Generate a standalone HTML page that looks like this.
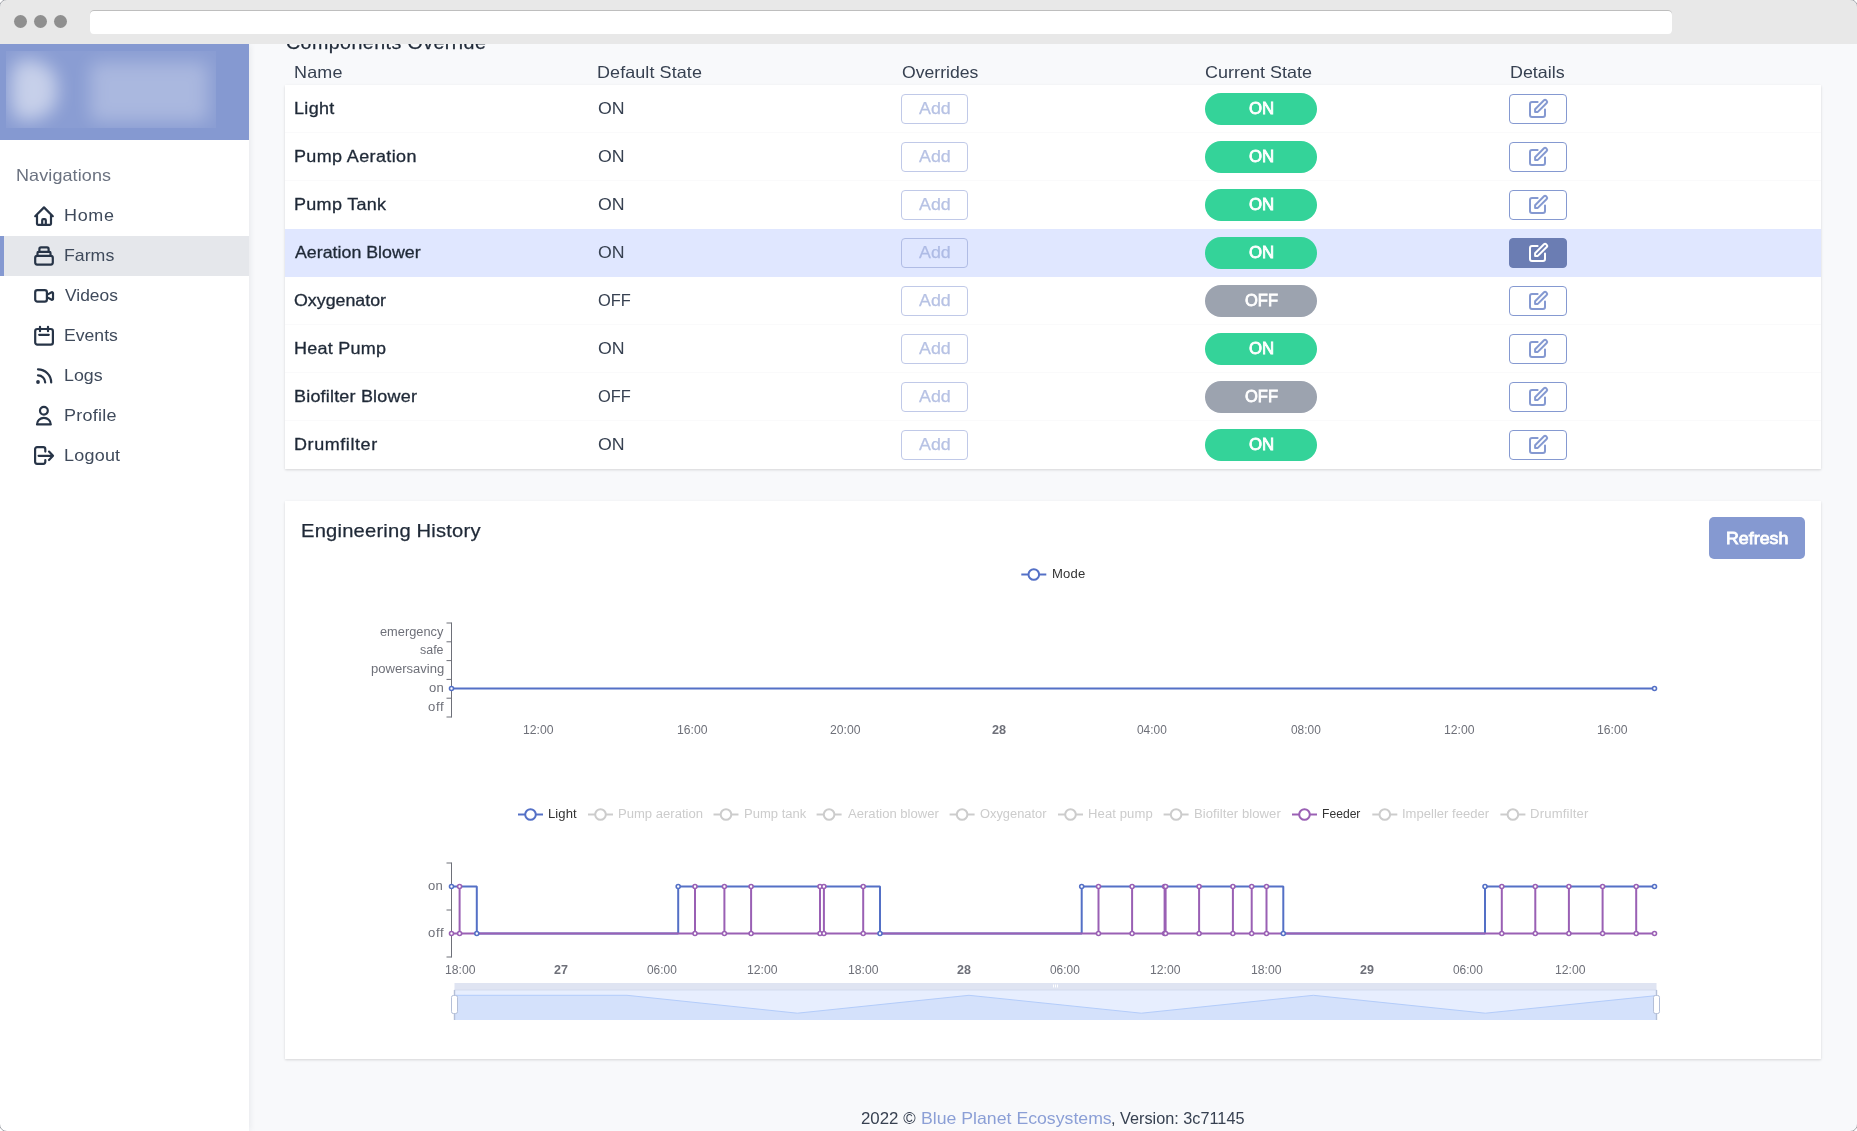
<!DOCTYPE html>
<html lang="en"><head><meta charset="utf-8"><title>Farm - Components Override</title><style>
*{box-sizing:border-box}
html,body{margin:0;padding:0}
body{width:1857px;height:1131px;overflow:hidden;background:#fff;position:relative;font-family:"Liberation Sans",sans-serif;}
#win{position:absolute;left:0;top:0;width:1857px;height:1131px;border-radius:7px;overflow:hidden;background:#f8f9fb;}
#frame{position:absolute;left:-1px;top:-1px;width:1859px;height:1133px;border:1px solid #a4a7ad;border-radius:8px;pointer-events:none}
.abs{position:absolute}
.grp{display:contents}
#chrome{position:absolute;left:0;top:0;width:1857px;height:44px;background:#e8e8e8;}
.dot{position:absolute;top:15px;width:13px;height:13px;border-radius:50%;background:#8f8f8f}
#url{position:absolute;left:90px;top:10px;width:1582px;height:24px;background:#fff;border-radius:4px;box-shadow:inset 0 1px 0 #bebebe}
#side{position:absolute;left:0;top:44px;width:249px;height:1087px;background:#fff;box-shadow:0 0 7px rgba(30,40,60,.10)}
#logo{position:absolute;left:0;top:0;width:249px;height:96px;background:#8599d1;overflow:hidden}
#blurbox{position:absolute;left:6px;top:7px;width:210px;height:77px;overflow:hidden;background:rgba(255,255,255,.045)}
#blurbox i{position:absolute;display:block;filter:blur(7px);background:#fff}
#active{position:absolute;left:0;top:192px;width:249px;height:40px;background:#e5e7eb;border-left:4px solid #8599d1}
.t{position:absolute;white-space:pre;line-height:20px;height:20px;transform-origin:0 50%}
.card{position:absolute;background:#fff;box-shadow:0 1px 3px rgba(0,0,0,.10),0 1px 2px rgba(0,0,0,.05)}
.rowline{position:absolute;left:285px;width:1536px;height:1px;background:#fafafb}
.add{position:absolute;left:901px;width:67px;height:30px;border:1px solid #c0c9e8;border-radius:4px;background:#fff}
.pill{position:absolute;left:1205px;width:112px;height:32px;border-radius:16px}
.on{background:#34d399}.off{background:#9ca3af}
.det{position:absolute;left:1509px;width:58px;height:30px;border:1px solid #8599d1;border-radius:4px;background:#fff}
.det.sel{background:#6b7db3;border-color:#6b7db3}
#refresh{position:absolute;left:1709px;top:517px;width:96px;height:42px;border-radius:5px;background:#8599d1}
svg{position:absolute;left:0;top:0;overflow:visible}
svg text{font-family:"Liberation Sans",sans-serif;font-size:12px}
</style></head><body>
<div id="win">
<main class="grp">
<section class="grp" id="components">
<div class="card" style="left:285px;top:85px;width:1536px;height:384px"></div>
<div class="abs" style="left:285px;top:229px;width:1536px;height:48px;background:#e0e7ff"></div>
<div class="rowline" style="top:132px"></div>
<div class="rowline" style="top:180px"></div>
<div class="rowline" style="top:324px"></div>
<div class="rowline" style="top:372px"></div>
<div class="rowline" style="top:420px"></div>
<div class="add" style="top:94px;"></div>
<div class="pill on" style="top:93px"></div>
<div class="det" style="top:94px"><svg width="20" height="20" viewBox="0 0 20 20" style="left:18px;top:3px" fill="none" stroke="#8599d1" stroke-width="2" stroke-linecap="round" stroke-linejoin="round"><path d="M9.6 4H4a2 2 0 0 0-2 2v11a2 2 0 0 0 2 2h11a2 2 0 0 0 2-2v-5.6" /><path d="M7.1 13.9v-2.7l8.9-8.9a1.5 1.5 0 0 1 2.1 0l.6.6a1.5 1.5 0 0 1 0 2.1l-8.9 8.9z"/></svg></div>
<div class="add" style="top:142px;"></div>
<div class="pill on" style="top:141px"></div>
<div class="det" style="top:142px"><svg width="20" height="20" viewBox="0 0 20 20" style="left:18px;top:3px" fill="none" stroke="#8599d1" stroke-width="2" stroke-linecap="round" stroke-linejoin="round"><path d="M9.6 4H4a2 2 0 0 0-2 2v11a2 2 0 0 0 2 2h11a2 2 0 0 0 2-2v-5.6" /><path d="M7.1 13.9v-2.7l8.9-8.9a1.5 1.5 0 0 1 2.1 0l.6.6a1.5 1.5 0 0 1 0 2.1l-8.9 8.9z"/></svg></div>
<div class="add" style="top:190px;"></div>
<div class="pill on" style="top:189px"></div>
<div class="det" style="top:190px"><svg width="20" height="20" viewBox="0 0 20 20" style="left:18px;top:3px" fill="none" stroke="#8599d1" stroke-width="2" stroke-linecap="round" stroke-linejoin="round"><path d="M9.6 4H4a2 2 0 0 0-2 2v11a2 2 0 0 0 2 2h11a2 2 0 0 0 2-2v-5.6" /><path d="M7.1 13.9v-2.7l8.9-8.9a1.5 1.5 0 0 1 2.1 0l.6.6a1.5 1.5 0 0 1 0 2.1l-8.9 8.9z"/></svg></div>
<div class="add" style="top:238px;background:transparent;border-color:#b0bce5;"></div>
<div class="pill on" style="top:237px"></div>
<div class="det sel" style="top:238px"><svg width="20" height="20" viewBox="0 0 20 20" style="left:18px;top:3px" fill="none" stroke="#fff" stroke-width="2" stroke-linecap="round" stroke-linejoin="round"><path d="M9.6 4H4a2 2 0 0 0-2 2v11a2 2 0 0 0 2 2h11a2 2 0 0 0 2-2v-5.6" /><path d="M7.1 13.9v-2.7l8.9-8.9a1.5 1.5 0 0 1 2.1 0l.6.6a1.5 1.5 0 0 1 0 2.1l-8.9 8.9z"/></svg></div>
<div class="add" style="top:286px;"></div>
<div class="pill off" style="top:285px"></div>
<div class="det" style="top:286px"><svg width="20" height="20" viewBox="0 0 20 20" style="left:18px;top:3px" fill="none" stroke="#8599d1" stroke-width="2" stroke-linecap="round" stroke-linejoin="round"><path d="M9.6 4H4a2 2 0 0 0-2 2v11a2 2 0 0 0 2 2h11a2 2 0 0 0 2-2v-5.6" /><path d="M7.1 13.9v-2.7l8.9-8.9a1.5 1.5 0 0 1 2.1 0l.6.6a1.5 1.5 0 0 1 0 2.1l-8.9 8.9z"/></svg></div>
<div class="add" style="top:334px;"></div>
<div class="pill on" style="top:333px"></div>
<div class="det" style="top:334px"><svg width="20" height="20" viewBox="0 0 20 20" style="left:18px;top:3px" fill="none" stroke="#8599d1" stroke-width="2" stroke-linecap="round" stroke-linejoin="round"><path d="M9.6 4H4a2 2 0 0 0-2 2v11a2 2 0 0 0 2 2h11a2 2 0 0 0 2-2v-5.6" /><path d="M7.1 13.9v-2.7l8.9-8.9a1.5 1.5 0 0 1 2.1 0l.6.6a1.5 1.5 0 0 1 0 2.1l-8.9 8.9z"/></svg></div>
<div class="add" style="top:382px;"></div>
<div class="pill off" style="top:381px"></div>
<div class="det" style="top:382px"><svg width="20" height="20" viewBox="0 0 20 20" style="left:18px;top:3px" fill="none" stroke="#8599d1" stroke-width="2" stroke-linecap="round" stroke-linejoin="round"><path d="M9.6 4H4a2 2 0 0 0-2 2v11a2 2 0 0 0 2 2h11a2 2 0 0 0 2-2v-5.6" /><path d="M7.1 13.9v-2.7l8.9-8.9a1.5 1.5 0 0 1 2.1 0l.6.6a1.5 1.5 0 0 1 0 2.1l-8.9 8.9z"/></svg></div>
<div class="add" style="top:430px;"></div>
<div class="pill on" style="top:429px"></div>
<div class="det" style="top:430px"><svg width="20" height="20" viewBox="0 0 20 20" style="left:18px;top:3px" fill="none" stroke="#8599d1" stroke-width="2" stroke-linecap="round" stroke-linejoin="round"><path d="M9.6 4H4a2 2 0 0 0-2 2v11a2 2 0 0 0 2 2h11a2 2 0 0 0 2-2v-5.6" /><path d="M7.1 13.9v-2.7l8.9-8.9a1.5 1.5 0 0 1 2.1 0l.6.6a1.5 1.5 0 0 1 0 2.1l-8.9 8.9z"/></svg></div>
<span class="t" style="left:285.54px;top:33px;font-size:18px;letter-spacing:0.403px;color:#1f2937;-webkit-text-stroke:0.25px #1f2937;transform:scaleX(1.0900);">Components Override</span>
<span class="t" style="left:294.07px;top:62px;font-size:16.5px;letter-spacing:0.169px;color:#374151;transform:scaleX(1.0900);">Name</span>
<span class="t" style="left:597.07px;top:62px;font-size:16.5px;letter-spacing:0.070px;color:#374151;transform:scaleX(1.0900);">Default State</span>
<span class="t" style="left:901.56px;top:62px;font-size:16.5px;letter-spacing:0.000px;color:#374151;transform:scaleX(1.0677);">Overrides</span>
<span class="t" style="left:1205.45px;top:62px;font-size:16.5px;letter-spacing:0.000px;color:#374151;transform:scaleX(1.0899);">Current State</span>
<span class="t" style="left:1509.77px;top:62px;font-size:16.5px;letter-spacing:0.000px;color:#374151;transform:scaleX(1.0839);">Details</span>
<span class="t" style="left:293.65px;top:98px;font-size:16.5px;letter-spacing:0.298px;color:#1f2937;-webkit-text-stroke:0.3px #1f2937;transform:scaleX(1.0900);">Light</span>
<span class="t" style="left:597.66px;top:98px;font-size:16.5px;letter-spacing:0.000px;color:#374151;transform:scaleX(1.0753);">ON</span>
<span class="t" style="left:918.53px;top:98px;font-size:16.5px;letter-spacing:0.000px;color:#b7c2e4;-webkit-text-stroke:0.25px #b7c2e4;transform:scaleX(1.0824);">Add</span>
<span class="t" style="left:1249.11px;top:98px;font-size:16.5px;letter-spacing:0.000px;color:#fff;-webkit-text-stroke:0.8px #fff;transform:scaleX(1.0162);">ON</span>
<span class="t" style="left:293.65px;top:146px;font-size:16.5px;letter-spacing:0.346px;color:#1f2937;-webkit-text-stroke:0.3px #1f2937;transform:scaleX(1.0900);">Pump Aeration</span>
<span class="t" style="left:597.66px;top:146px;font-size:16.5px;letter-spacing:0.000px;color:#374151;transform:scaleX(1.0753);">ON</span>
<span class="t" style="left:918.53px;top:146px;font-size:16.5px;letter-spacing:0.000px;color:#b7c2e4;-webkit-text-stroke:0.25px #b7c2e4;transform:scaleX(1.0824);">Add</span>
<span class="t" style="left:1249.11px;top:146px;font-size:16.5px;letter-spacing:0.000px;color:#fff;-webkit-text-stroke:0.8px #fff;transform:scaleX(1.0162);">ON</span>
<span class="t" style="left:293.65px;top:194px;font-size:16.5px;letter-spacing:0.276px;color:#1f2937;-webkit-text-stroke:0.3px #1f2937;transform:scaleX(1.0900);">Pump Tank</span>
<span class="t" style="left:597.66px;top:194px;font-size:16.5px;letter-spacing:0.000px;color:#374151;transform:scaleX(1.0753);">ON</span>
<span class="t" style="left:918.53px;top:194px;font-size:16.5px;letter-spacing:0.000px;color:#b7c2e4;-webkit-text-stroke:0.25px #b7c2e4;transform:scaleX(1.0824);">Add</span>
<span class="t" style="left:1249.11px;top:194px;font-size:16.5px;letter-spacing:0.000px;color:#fff;-webkit-text-stroke:0.8px #fff;transform:scaleX(1.0162);">ON</span>
<span class="t" style="left:294.76px;top:242px;font-size:16.5px;letter-spacing:0.000px;color:#1f2937;-webkit-text-stroke:0.3px #1f2937;transform:scaleX(1.0786);">Aeration Blower</span>
<span class="t" style="left:597.66px;top:242px;font-size:16.5px;letter-spacing:0.000px;color:#374151;transform:scaleX(1.0753);">ON</span>
<span class="t" style="left:918.53px;top:242px;font-size:16.5px;letter-spacing:0.000px;color:#aebbe5;-webkit-text-stroke:0.25px #aebbe5;transform:scaleX(1.0824);">Add</span>
<span class="t" style="left:1249.11px;top:242px;font-size:16.5px;letter-spacing:0.000px;color:#fff;-webkit-text-stroke:0.8px #fff;transform:scaleX(1.0162);">ON</span>
<span class="t" style="left:293.76px;top:290px;font-size:16.5px;letter-spacing:-0.000px;color:#1f2937;-webkit-text-stroke:0.3px #1f2937;transform:scaleX(1.0785);">Oxygenator</span>
<span class="t" style="left:597.67px;top:290px;font-size:16.5px;letter-spacing:0.000px;color:#374151;transform:scaleX(0.9964);">OFF</span>
<span class="t" style="left:918.53px;top:290px;font-size:16.5px;letter-spacing:0.000px;color:#b7c2e4;-webkit-text-stroke:0.25px #b7c2e4;transform:scaleX(1.0824);">Add</span>
<span class="t" style="left:1244.90px;top:290px;font-size:16.5px;letter-spacing:0.000px;color:#fff;-webkit-text-stroke:0.8px #fff;transform:scaleX(0.9993);">OFF</span>
<span class="t" style="left:293.65px;top:338px;font-size:16.5px;letter-spacing:0.236px;color:#1f2937;-webkit-text-stroke:0.3px #1f2937;transform:scaleX(1.0900);">Heat Pump</span>
<span class="t" style="left:597.66px;top:338px;font-size:16.5px;letter-spacing:0.000px;color:#374151;transform:scaleX(1.0753);">ON</span>
<span class="t" style="left:918.53px;top:338px;font-size:16.5px;letter-spacing:0.000px;color:#b7c2e4;-webkit-text-stroke:0.25px #b7c2e4;transform:scaleX(1.0824);">Add</span>
<span class="t" style="left:1249.11px;top:338px;font-size:16.5px;letter-spacing:0.000px;color:#fff;-webkit-text-stroke:0.8px #fff;transform:scaleX(1.0162);">ON</span>
<span class="t" style="left:293.65px;top:386px;font-size:16.5px;letter-spacing:0.179px;color:#1f2937;-webkit-text-stroke:0.3px #1f2937;transform:scaleX(1.0900);">Biofilter Blower</span>
<span class="t" style="left:597.67px;top:386px;font-size:16.5px;letter-spacing:0.000px;color:#374151;transform:scaleX(0.9964);">OFF</span>
<span class="t" style="left:918.53px;top:386px;font-size:16.5px;letter-spacing:0.000px;color:#b7c2e4;-webkit-text-stroke:0.25px #b7c2e4;transform:scaleX(1.0824);">Add</span>
<span class="t" style="left:1244.90px;top:386px;font-size:16.5px;letter-spacing:0.000px;color:#fff;-webkit-text-stroke:0.8px #fff;transform:scaleX(0.9993);">OFF</span>
<span class="t" style="left:293.65px;top:434px;font-size:16.5px;letter-spacing:0.533px;color:#1f2937;-webkit-text-stroke:0.3px #1f2937;transform:scaleX(1.0900);">Drumfilter</span>
<span class="t" style="left:597.66px;top:434px;font-size:16.5px;letter-spacing:0.000px;color:#374151;transform:scaleX(1.0753);">ON</span>
<span class="t" style="left:918.53px;top:434px;font-size:16.5px;letter-spacing:0.000px;color:#b7c2e4;-webkit-text-stroke:0.25px #b7c2e4;transform:scaleX(1.0824);">Add</span>
<span class="t" style="left:1249.11px;top:434px;font-size:16.5px;letter-spacing:0.000px;color:#fff;-webkit-text-stroke:0.8px #fff;transform:scaleX(1.0162);">ON</span>
</section>
<section class="grp" id="history">
<div class="card" style="left:285px;top:501px;width:1536px;height:558px"></div>
<div id="refresh"></div>
<svg width="1857" height="1131" viewBox="0 0 1857 1131">
<g stroke="#5470c6" stroke-width="2" fill="#fff"><path d="M1021.3 574.5h25"/><circle cx="1033.8" cy="574.5" r="5.3"/></g>
<path d="M451.5 622.5V717.5M446.5 623.0h5M446.5 641.8h5M446.5 660.6h5M446.5 679.4h5M446.5 698.2h5M446.5 717.0h5" stroke="#6e7079" stroke-width="1" fill="none"/>
<path d="M451.5 688.5H1654.5" stroke="#5470c6" stroke-width="2" fill="none"/>
<circle cx="451.5" cy="688.5" r="2" fill="#fff" stroke="#5470c6" stroke-width="1.6"/>
<circle cx="1654.5" cy="688.5" r="2" fill="#fff" stroke="#5470c6" stroke-width="1.6"/>
<g stroke="#5470c6" stroke-width="2" fill="#fff"><path d="M518 814.5h25"/><circle cx="530.5" cy="814.5" r="5.3"/></g>
<g stroke="#ccc" stroke-width="2" fill="#fff"><path d="M588 814.5h25"/><circle cx="600.5" cy="814.5" r="5.3"/></g>
<g stroke="#ccc" stroke-width="2" fill="#fff"><path d="M713.5 814.5h25"/><circle cx="726.0" cy="814.5" r="5.3"/></g>
<g stroke="#ccc" stroke-width="2" fill="#fff"><path d="M816.6 814.5h25"/><circle cx="829.1" cy="814.5" r="5.3"/></g>
<g stroke="#ccc" stroke-width="2" fill="#fff"><path d="M949.6 814.5h25"/><circle cx="962.1" cy="814.5" r="5.3"/></g>
<g stroke="#ccc" stroke-width="2" fill="#fff"><path d="M1058 814.5h25"/><circle cx="1070.5" cy="814.5" r="5.3"/></g>
<g stroke="#ccc" stroke-width="2" fill="#fff"><path d="M1163.6 814.5h25"/><circle cx="1176.1" cy="814.5" r="5.3"/></g>
<g stroke="#9a60b4" stroke-width="2" fill="#fff"><path d="M1292 814.5h25"/><circle cx="1304.5" cy="814.5" r="5.3"/></g>
<g stroke="#ccc" stroke-width="2" fill="#fff"><path d="M1372.3 814.5h25"/><circle cx="1384.8" cy="814.5" r="5.3"/></g>
<g stroke="#ccc" stroke-width="2" fill="#fff"><path d="M1500.4 814.5h25"/><circle cx="1512.9" cy="814.5" r="5.3"/></g>
<path d="M451.5 862.5V957.5M446.5 863h5M446.5 910h5M446.5 957h5" stroke="#6e7079" stroke-width="1" fill="none"/>
<path d="M451.5 886.5 L476.8 886.5 L476.8 933.5 L678.2 933.5 L678.2 886.5 L880 886.5 L880 933.5 L1081.7 933.5 L1081.7 886.5 L1283.3 886.5 L1283.3 933.5 L1485 933.5 L1485 886.5 L1654.5 886.5" stroke="#5470c6" stroke-width="2" fill="none" stroke-linejoin="bevel"/>
<path d="M451.5 933.5 L459.6 933.5 L459.6 886.5 L459.6 933.5 L695 933.5 L695 886.5 L695 933.5 L724.4 933.5 L724.4 886.5 L724.4 933.5 L751.1 933.5 L751.1 886.5 L751.1 933.5 L820 933.5 L820 886.5 L820 933.5 L823.9 933.5 L823.9 886.5 L823.9 933.5 L863.2 933.5 L863.2 886.5 L863.2 933.5 L1098.5 933.5 L1098.5 886.5 L1098.5 933.5 L1132.1 933.5 L1132.1 886.5 L1132.1 933.5 L1164.6 933.5 L1164.6 886.5 L1164.6 933.5 L1165.6 933.5 L1165.6 886.5 L1165.6 933.5 L1199.1 933.5 L1199.1 886.5 L1199.1 933.5 L1232.9 933.5 L1232.9 886.5 L1232.9 933.5 L1251.7 933.5 L1251.7 886.5 L1251.7 933.5 L1266.5 933.5 L1266.5 886.5 L1266.5 933.5 L1501.8 933.5 L1501.8 886.5 L1501.8 933.5 L1535.3 933.5 L1535.3 886.5 L1535.3 933.5 L1568.9 933.5 L1568.9 886.5 L1568.9 933.5 L1602.6 933.5 L1602.6 886.5 L1602.6 933.5 L1636.2 933.5 L1636.2 886.5 L1636.2 933.5 L1654.5 933.5" stroke="#9a60b4" stroke-width="2" fill="none" stroke-linejoin="bevel"/>
<circle cx="451.5" cy="886.5" r="2" fill="#fff" stroke="#5470c6" stroke-width="1.6"/>
<circle cx="476.8" cy="933.5" r="2" fill="#fff" stroke="#5470c6" stroke-width="1.6"/>
<circle cx="678.2" cy="886.5" r="2" fill="#fff" stroke="#5470c6" stroke-width="1.6"/>
<circle cx="880" cy="933.5" r="2" fill="#fff" stroke="#5470c6" stroke-width="1.6"/>
<circle cx="1081.7" cy="886.5" r="2" fill="#fff" stroke="#5470c6" stroke-width="1.6"/>
<circle cx="1283.3" cy="933.5" r="2" fill="#fff" stroke="#5470c6" stroke-width="1.6"/>
<circle cx="1485" cy="886.5" r="2" fill="#fff" stroke="#5470c6" stroke-width="1.6"/>
<circle cx="1654.5" cy="886.5" r="2" fill="#fff" stroke="#5470c6" stroke-width="1.6"/>
<circle cx="451.5" cy="933.5" r="2" fill="#fff" stroke="#9a60b4" stroke-width="1.6"/>
<circle cx="1654.5" cy="933.5" r="2" fill="#fff" stroke="#9a60b4" stroke-width="1.6"/>
<circle cx="459.6" cy="886.5" r="2" fill="#fff" stroke="#9a60b4" stroke-width="1.6"/>
<circle cx="459.6" cy="933.5" r="2" fill="#fff" stroke="#9a60b4" stroke-width="1.6"/>
<circle cx="695" cy="886.5" r="2" fill="#fff" stroke="#9a60b4" stroke-width="1.6"/>
<circle cx="695" cy="933.5" r="2" fill="#fff" stroke="#9a60b4" stroke-width="1.6"/>
<circle cx="724.4" cy="886.5" r="2" fill="#fff" stroke="#9a60b4" stroke-width="1.6"/>
<circle cx="724.4" cy="933.5" r="2" fill="#fff" stroke="#9a60b4" stroke-width="1.6"/>
<circle cx="751.1" cy="886.5" r="2" fill="#fff" stroke="#9a60b4" stroke-width="1.6"/>
<circle cx="751.1" cy="933.5" r="2" fill="#fff" stroke="#9a60b4" stroke-width="1.6"/>
<circle cx="820" cy="886.5" r="2" fill="#fff" stroke="#9a60b4" stroke-width="1.6"/>
<circle cx="820" cy="933.5" r="2" fill="#fff" stroke="#9a60b4" stroke-width="1.6"/>
<circle cx="823.9" cy="886.5" r="2" fill="#fff" stroke="#9a60b4" stroke-width="1.6"/>
<circle cx="823.9" cy="933.5" r="2" fill="#fff" stroke="#9a60b4" stroke-width="1.6"/>
<circle cx="863.2" cy="886.5" r="2" fill="#fff" stroke="#9a60b4" stroke-width="1.6"/>
<circle cx="863.2" cy="933.5" r="2" fill="#fff" stroke="#9a60b4" stroke-width="1.6"/>
<circle cx="1098.5" cy="886.5" r="2" fill="#fff" stroke="#9a60b4" stroke-width="1.6"/>
<circle cx="1098.5" cy="933.5" r="2" fill="#fff" stroke="#9a60b4" stroke-width="1.6"/>
<circle cx="1132.1" cy="886.5" r="2" fill="#fff" stroke="#9a60b4" stroke-width="1.6"/>
<circle cx="1132.1" cy="933.5" r="2" fill="#fff" stroke="#9a60b4" stroke-width="1.6"/>
<circle cx="1164.6" cy="886.5" r="2" fill="#fff" stroke="#9a60b4" stroke-width="1.6"/>
<circle cx="1164.6" cy="933.5" r="2" fill="#fff" stroke="#9a60b4" stroke-width="1.6"/>
<circle cx="1165.6" cy="886.5" r="2" fill="#fff" stroke="#9a60b4" stroke-width="1.6"/>
<circle cx="1165.6" cy="933.5" r="2" fill="#fff" stroke="#9a60b4" stroke-width="1.6"/>
<circle cx="1199.1" cy="886.5" r="2" fill="#fff" stroke="#9a60b4" stroke-width="1.6"/>
<circle cx="1199.1" cy="933.5" r="2" fill="#fff" stroke="#9a60b4" stroke-width="1.6"/>
<circle cx="1232.9" cy="886.5" r="2" fill="#fff" stroke="#9a60b4" stroke-width="1.6"/>
<circle cx="1232.9" cy="933.5" r="2" fill="#fff" stroke="#9a60b4" stroke-width="1.6"/>
<circle cx="1251.7" cy="886.5" r="2" fill="#fff" stroke="#9a60b4" stroke-width="1.6"/>
<circle cx="1251.7" cy="933.5" r="2" fill="#fff" stroke="#9a60b4" stroke-width="1.6"/>
<circle cx="1266.5" cy="886.5" r="2" fill="#fff" stroke="#9a60b4" stroke-width="1.6"/>
<circle cx="1266.5" cy="933.5" r="2" fill="#fff" stroke="#9a60b4" stroke-width="1.6"/>
<circle cx="1501.8" cy="886.5" r="2" fill="#fff" stroke="#9a60b4" stroke-width="1.6"/>
<circle cx="1501.8" cy="933.5" r="2" fill="#fff" stroke="#9a60b4" stroke-width="1.6"/>
<circle cx="1535.3" cy="886.5" r="2" fill="#fff" stroke="#9a60b4" stroke-width="1.6"/>
<circle cx="1535.3" cy="933.5" r="2" fill="#fff" stroke="#9a60b4" stroke-width="1.6"/>
<circle cx="1568.9" cy="886.5" r="2" fill="#fff" stroke="#9a60b4" stroke-width="1.6"/>
<circle cx="1568.9" cy="933.5" r="2" fill="#fff" stroke="#9a60b4" stroke-width="1.6"/>
<circle cx="1602.6" cy="886.5" r="2" fill="#fff" stroke="#9a60b4" stroke-width="1.6"/>
<circle cx="1602.6" cy="933.5" r="2" fill="#fff" stroke="#9a60b4" stroke-width="1.6"/>
<circle cx="1636.2" cy="886.5" r="2" fill="#fff" stroke="#9a60b4" stroke-width="1.6"/>
<circle cx="1636.2" cy="933.5" r="2" fill="#fff" stroke="#9a60b4" stroke-width="1.6"/>
<rect x="454.5" y="990" width="1202.0" height="30" fill="#e7eefe"/>
<path d="M454.5 995.3 L627 995.3 L797.3 1013.2 L969 995.3 L1141.3 1013.2 L1313.4 995.3 L1485.3 1013.2 L1656.5 995.6 L1656.5 1020 L454.5 1020Z" fill="#d4e1fb"/>
<path d="M454.5 995.3 L627 995.3 L797.3 1013.2 L969 995.3 L1141.3 1013.2 L1313.4 995.3 L1485.3 1013.2 L1656.5 995.6" fill="none" stroke="#b3ccfa" stroke-width="1"/>
<rect x="454.5" y="983" width="1202.0" height="7" fill="#dfe4f2"/>
<path d="M454.5 990H1656.5" stroke="#d3dbee" stroke-width="1"/>
<path d="M1053.5 984.5v3M1055.5 984.5v3M1057.5 984.5v3" stroke="#fff" stroke-width="1"/>
<path d="M454.5 990V1020" stroke="#b4bfd8" stroke-width="1.4"/>
<rect x="451.5" y="995.5" width="6" height="18" rx="1.8" fill="#fff" stroke="#b4bfd8" stroke-width="1"/>
<path d="M1656.5 990V1020" stroke="#b4bfd8" stroke-width="1.4"/>
<rect x="1653.5" y="995.5" width="6" height="18" rx="1.8" fill="#fff" stroke="#b4bfd8" stroke-width="1"/>
</svg>
<span class="t" style="left:301.48px;top:521px;font-size:18.5px;letter-spacing:0.181px;color:#1f2937;-webkit-text-stroke:0.25px #1f2937;transform:scaleX(1.0900);">Engineering History</span>
<span class="t" style="left:1726.04px;top:528px;font-size:16.5px;letter-spacing:0.000px;color:#fff;-webkit-text-stroke:0.8px #fff;transform:scaleX(1.0805);">Refresh</span>
<span class="t" style="left:380.29px;top:622px;font-size:12px;letter-spacing:0.000px;color:#6e7079;transform:scaleX(1.0664);">emergency</span>
<span class="t" style="left:420.31px;top:640px;font-size:12px;letter-spacing:-0.000px;color:#6e7079;transform:scaleX(1.0365);">safe</span>
<span class="t" style="left:370.54px;top:659px;font-size:12px;letter-spacing:0.000px;color:#6e7079;transform:scaleX(1.0855);">powersaving</span>
<span class="t" style="left:428.77px;top:678px;font-size:12px;letter-spacing:0.296px;color:#6e7079;transform:scaleX(1.0900);">on</span>
<span class="t" style="left:427.67px;top:697px;font-size:12px;letter-spacing:0.585px;color:#6e7079;transform:scaleX(1.0900);">off</span>
<span class="t" style="left:523.10px;top:720px;font-size:12px;letter-spacing:0.000px;color:#6e7079;transform:scaleX(1.0168);">12:00</span>
<span class="t" style="left:676.70px;top:720px;font-size:12px;letter-spacing:0.000px;color:#6e7079;transform:scaleX(1.0168);">16:00</span>
<span class="t" style="left:830.04px;top:720px;font-size:12px;letter-spacing:-0.000px;color:#6e7079;transform:scaleX(1.0155);">20:00</span>
<span class="t" style="left:991.80px;top:720px;font-size:12px;letter-spacing:0.000px;color:#6e7079;font-weight:700;transform:scaleX(1.0554);">28</span>
<span class="t" style="left:1137.48px;top:720px;font-size:12px;letter-spacing:0.000px;color:#6e7079;transform:scaleX(0.9909);">04:00</span>
<span class="t" style="left:1290.98px;top:720px;font-size:12px;letter-spacing:0.000px;color:#6e7079;transform:scaleX(0.9909);">08:00</span>
<span class="t" style="left:1443.70px;top:720px;font-size:12px;letter-spacing:0.000px;color:#6e7079;transform:scaleX(1.0168);">12:00</span>
<span class="t" style="left:1597.20px;top:720px;font-size:12px;letter-spacing:0.000px;color:#6e7079;transform:scaleX(1.0168);">16:00</span>
<span class="t" style="left:1051.83px;top:564px;font-size:12px;letter-spacing:0.201px;color:#333;transform:scaleX(1.0900);">Mode</span>
<span class="t" style="left:548.13px;top:804px;font-size:12px;letter-spacing:0.069px;color:#333;transform:scaleX(1.0900);">Light</span>
<span class="t" style="left:618.03px;top:804px;font-size:12px;letter-spacing:0.000px;color:#ccc;transform:scaleX(1.0891);">Pump aeration</span>
<span class="t" style="left:743.53px;top:804px;font-size:12px;letter-spacing:-0.000px;color:#ccc;transform:scaleX(1.0853);">Pump tank</span>
<span class="t" style="left:847.61px;top:804px;font-size:12px;letter-spacing:0.000px;color:#ccc;transform:scaleX(1.0899);">Aeration blower</span>
<span class="t" style="left:979.90px;top:804px;font-size:12px;letter-spacing:0.000px;color:#ccc;transform:scaleX(1.0712);">Oxygenator</span>
<span class="t" style="left:1088.13px;top:804px;font-size:12px;letter-spacing:0.084px;color:#ccc;transform:scaleX(1.0900);">Heat pump</span>
<span class="t" style="left:1193.63px;top:804px;font-size:12px;letter-spacing:0.059px;color:#ccc;transform:scaleX(1.0900);">Biofilter blower</span>
<span class="t" style="left:1322.14px;top:804px;font-size:12px;letter-spacing:0.000px;color:#333;transform:scaleX(1.0100);">Feeder</span>
<span class="t" style="left:1402.25px;top:804px;font-size:12px;letter-spacing:0.000px;color:#ccc;transform:scaleX(1.0870);">Impeller feeder</span>
<span class="t" style="left:1530.43px;top:804px;font-size:12px;letter-spacing:0.174px;color:#ccc;transform:scaleX(1.0900);">Drumfilter</span>
<span class="t" style="left:428.47px;top:876px;font-size:12px;letter-spacing:0.296px;color:#6e7079;transform:scaleX(1.0900);">on</span>
<span class="t" style="left:427.57px;top:923px;font-size:12px;letter-spacing:0.585px;color:#6e7079;transform:scaleX(1.0900);">off</span>
<span class="t" style="left:444.70px;top:960px;font-size:12px;letter-spacing:0.000px;color:#6e7079;transform:scaleX(1.0168);">18:00</span>
<span class="t" style="left:554.30px;top:960px;font-size:12px;letter-spacing:0.000px;color:#6e7079;font-weight:700;transform:scaleX(1.0436);">27</span>
<span class="t" style="left:647.08px;top:960px;font-size:12px;letter-spacing:0.000px;color:#6e7079;transform:scaleX(0.9909);">06:00</span>
<span class="t" style="left:747.00px;top:960px;font-size:12px;letter-spacing:0.000px;color:#6e7079;transform:scaleX(1.0168);">12:00</span>
<span class="t" style="left:847.70px;top:960px;font-size:12px;letter-spacing:0.000px;color:#6e7079;transform:scaleX(1.0168);">18:00</span>
<span class="t" style="left:957.29px;top:960px;font-size:12px;letter-spacing:0.000px;color:#6e7079;font-weight:700;transform:scaleX(1.0410);">28</span>
<span class="t" style="left:1050.08px;top:960px;font-size:12px;letter-spacing:0.000px;color:#6e7079;transform:scaleX(0.9909);">06:00</span>
<span class="t" style="left:1150.10px;top:960px;font-size:12px;letter-spacing:0.000px;color:#6e7079;transform:scaleX(1.0168);">12:00</span>
<span class="t" style="left:1250.80px;top:960px;font-size:12px;letter-spacing:0.000px;color:#6e7079;transform:scaleX(1.0168);">18:00</span>
<span class="t" style="left:1360.39px;top:960px;font-size:12px;letter-spacing:0.000px;color:#6e7079;font-weight:700;transform:scaleX(1.0418);">29</span>
<span class="t" style="left:1453.48px;top:960px;font-size:12px;letter-spacing:0.000px;color:#6e7079;transform:scaleX(0.9909);">06:00</span>
<span class="t" style="left:1554.50px;top:960px;font-size:12px;letter-spacing:0.000px;color:#6e7079;transform:scaleX(1.0168);">12:00</span>
</section>
<footer class="grp">
<span class="t" style="left:861.37px;top:1108px;font-size:16.5px;letter-spacing:0.000px;color:#374151;transform:scaleX(1.0212);">2022 ©</span>
<span class="t" style="left:920.67px;top:1108px;font-size:16.5px;letter-spacing:0.000px;color:#8b9fd6;transform:scaleX(1.0719);">Blue Planet Ecosystems</span>
<span class="t" style="left:1111.39px;top:1108px;font-size:16.5px;letter-spacing:0.000px;color:#374151;transform:scaleX(0.9854);">, Version: 3c71145</span>
</footer>
</main>
<nav class="grp">
<div id="side"><div id="logo"><div id="blurbox"><i style="left:5px;top:8px;width:46px;height:62px;border-radius:35% 100% 100% 35% / 50% 50% 50% 50%;opacity:.52;filter:blur(9px)"></i><i style="left:84px;top:11px;width:118px;height:60px;border-radius:6px;opacity:.275;filter:blur(9px)"></i></div></div><div id="active"></div></div>
<svg width="20" height="20" viewBox="0 0 20 20" style="left:34px;top:206px" fill="none" stroke="#273447" stroke-width="2.2" stroke-linecap="round" stroke-linejoin="round"><path d="M1.2 10.2 10 1.4l8.8 8.8"/><path d="M3 9.2V17.8a1 1 0 0 0 1 1H16a1 1 0 0 0 1-1V9.2"/><path d="M8.2 18.6v-4.4a1 1 0 0 1 1-1h1.6a1 1 0 0 1 1 1v4.4"/></svg>
<svg width="20" height="20" viewBox="0 0 20 20" style="left:34px;top:246px" fill="none" stroke="#273447" stroke-width="2.2" stroke-linecap="round" stroke-linejoin="round"><rect x="1.2" y="9.8" width="17.6" height="8.8" rx="2"/><path d="M3.5 9.6V6.9a1 1 0 0 1 1-1H15.5a1 1 0 0 1 1 1v2.7"/><path d="M5.4 5.8V2.9a1.6 1.6 0 0 1 1.6-1.6h6A1.6 1.6 0 0 1 14.6 2.9v2.9"/></svg>
<svg width="20" height="20" viewBox="0 0 20 20" style="left:34px;top:286px" fill="none" stroke="#273447" stroke-width="2.2" stroke-linecap="round" stroke-linejoin="round"><rect x="1.2" y="4.2" width="11.7" height="11.5" rx="2.2"/><path d="M13.4 8.6l4.3-2.3a.9.9 0 0 1 1.3.8v5.8a.9.9 0 0 1-1.3.8l-4.3-2.3"/></svg>
<svg width="20" height="20" viewBox="0 0 20 20" style="left:34px;top:326px" fill="none" stroke="#273447" stroke-width="2.2" stroke-linecap="round" stroke-linejoin="round"><rect x="1.2" y="3" width="17.7" height="15.7" rx="2.2"/><path d="M6 .8v4.4M14 .8v4.4M5.2 8.8h9.6"/></svg>
<svg width="20" height="20" viewBox="0 0 20 20" style="left:34px;top:366px" fill="none" stroke="#273447" stroke-width="2.2" stroke-linecap="round" stroke-linejoin="round"><path d="M4 3.3A13.2 13.2 0 0 1 17.2 16.5"/><path d="M4 9.3a7.2 7.2 0 0 1 7.2 7.2"/><circle cx="4" cy="16" r="1.9" fill="#273447" stroke="none"/></svg>
<svg width="20" height="20" viewBox="0 0 20 20" style="left:34px;top:406px" fill="none" stroke="#273447" stroke-width="2.2" stroke-linecap="round" stroke-linejoin="round"><circle cx="9.9" cy="4.8" r="3.9"/><path d="M3 18.4a6.9 6.6 0 0 1 13.8 0z"/></svg>
<svg width="20" height="20" viewBox="0 0 20 20" style="left:34px;top:446px" fill="none" stroke="#273447" stroke-width="2.2" stroke-linecap="round" stroke-linejoin="round"><path d="M11.3 5.6V3.2a2 2 0 0 0-2-2H3.1a2 2 0 0 0-2 2V15.8a2 2 0 0 0 2 2H9.3a2 2 0 0 0 2-2V14"/><path d="M4.6 9.8H18.6M15 5.6l4 4.2-4 4.2"/></svg>
<span class="t" style="left:16.17px;top:165px;font-size:16.5px;letter-spacing:0.096px;color:#6b7280;transform:scaleX(1.0900);">Navigations</span>
<span class="t" style="left:64.27px;top:205px;font-size:16.5px;letter-spacing:0.598px;color:#3f4a5b;transform:scaleX(1.0900);">Home</span>
<span class="t" style="left:64.27px;top:245px;font-size:16.5px;letter-spacing:0.000px;color:#3f4a5b;transform:scaleX(1.0752);">Farms</span>
<span class="t" style="left:65.37px;top:285px;font-size:16.5px;letter-spacing:0.000px;color:#3f4a5b;transform:scaleX(1.0536);">Videos</span>
<span class="t" style="left:64.28px;top:325px;font-size:16.5px;letter-spacing:0.000px;color:#3f4a5b;transform:scaleX(1.0678);">Events</span>
<span class="t" style="left:64.27px;top:365px;font-size:16.5px;letter-spacing:0.000px;color:#3f4a5b;transform:scaleX(1.0788);">Logs</span>
<span class="t" style="left:64.27px;top:405px;font-size:16.5px;letter-spacing:0.250px;color:#3f4a5b;transform:scaleX(1.0900);">Profile</span>
<span class="t" style="left:64.27px;top:445px;font-size:16.5px;letter-spacing:0.204px;color:#3f4a5b;transform:scaleX(1.0900);">Logout</span>
</nav>
<header id="chrome"><div class="dot" style="left:13.5px"></div><div class="dot" style="left:33.5px"></div><div class="dot" style="left:53.5px"></div><div id="url"></div></header>
</div>
<div id="frame"></div>
</body></html>
